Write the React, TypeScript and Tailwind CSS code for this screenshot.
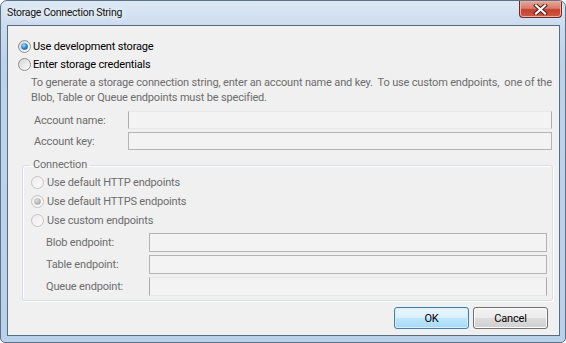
import { useId } from "react";

function Radio({ checked = false, disabled = false }: { checked?: boolean; disabled?: boolean }) {
  const id = useId().replace(/:/g, "");
  const ring = disabled ? "#c3c3c3" : "#8e8f8f";
  return (
    <svg width="13" height="13" viewBox="0 0 13 13" className="shrink-0">
      <defs>
        <linearGradient id={`f${id}`} x1="0" y1="0" x2="1" y2="1">
          <stop offset="0" stopColor={disabled ? "#ececec" : "#d2d2d2"} />
          <stop offset="1" stopColor={disabled ? "#fbfbfb" : "#ffffff"} />
        </linearGradient>
        <radialGradient id={`d${id}`} cx="0.4" cy="0.35" r="0.7">
          <stop offset="0" stopColor={disabled ? "#e4e4e4" : "#9fdcff"} />
          <stop offset="0.6" stopColor={disabled ? "#b8b8b8" : "#2b8ad1"} />
          <stop offset="1" stopColor={disabled ? "#a4a4a4" : "#12508a"} />
        </radialGradient>
      </defs>
      <circle cx="6.5" cy="6.5" r="6" fill={`url(#f${id})`} stroke={ring} strokeWidth="1" />
      {checked && <circle cx="6.5" cy="6.5" r="3.3" fill={`url(#d${id})`} />}
    </svg>
  );
}

function Field({ faint = false }: { faint?: boolean }) {
  return (
    <div
      className={
        faint
          ? "flex-1 h-full bg-[#f3f3f3] border border-[#ababab] border-t-[#e8e8e8] border-b-[#e8e8e8]"
          : "flex-1 h-full bg-[#f3f3f3] border border-[#b4b4b4]"
      }
    />
  );
}

function Button({ label, primary = false }: { label: string; primary?: boolean }) {
  return (
    <button
      className={
        primary
          ? "w-[75px] h-[22px] rounded-[3px] border border-[#3c7fb1] bg-[linear-gradient(#eaf6fd_0%,#d9f0fc_50%,#bee6fd_51%,#a7d9f5_100%)] shadow-[inset_0_0_0_1px_#d9f0fc] text-black"
          : "w-[75px] h-[22px] rounded-[3px] border border-[#707070] bg-[linear-gradient(#f2f2f2_0%,#ebebeb_50%,#dddddd_51%,#cfcfcf_100%)] shadow-[inset_0_0_0_1px_#fcfcfc] text-black"
      }
    >
      {label}
    </button>
  );
}

export default function App() {
  return (
    <div className="w-[566px] h-[343px] flex flex-col overflow-hidden rounded-t-[7px] rounded-b-[5px] border border-[#5e7185] bg-[linear-gradient(#dce8f5_0px,#cbdcef_24px,#bcd3ec_60px,#b9d1ea_100%)] font-['Roboto',sans-serif] text-[11px] leading-none tracking-[-0.17px]">
      <div className="h-[24px] flex items-start justify-between">
        <div className="pl-[6px] pt-[7px] text-[10.5px] tracking-[-0.28px] text-[#111] [text-shadow:0_0_6px_#fff,0_0_10px_#fff]">
          Storage Connection String
        </div>
        <div className="mr-[3px] w-[43px] h-[17px] rounded-b-[4px] border border-t-0 border-[#6e2a22] bg-[linear-gradient(#e8a597_0%,#d77c6c_45%,#c4412f_55%,#cf5a44_100%)] shadow-[inset_0_0_0_1px_#eab0a5] flex items-center justify-center">
          <svg width="15" height="11" viewBox="0 0 15 11">
            <path d="M3 1.5 L12 9.5 M12 1.5 L3 9.5" stroke="#4a1a14" strokeWidth="4" strokeLinecap="square" />
            <path d="M3 1.5 L12 9.5 M12 1.5 L3 9.5" stroke="#ffffff" strokeWidth="2.2" strokeLinecap="square" />
          </svg>
        </div>
      </div>

      <div className="flex-1 ml-[6px] mr-[5px] mb-[6px] border border-[#5a6c7e] bg-[#f0f0f0] flex flex-col text-black">
        <div className="pt-[11px] pl-[10px] flex flex-col">
          <div className="h-[18px] flex items-center gap-[2px]">
            <Radio checked />
            <span>Use development storage</span>
          </div>
          <div className="h-[18px] flex items-center gap-[2px]">
            <Radio />
            <span>Enter storage credentials</span>
          </div>
        </div>

        <div className="mt-[2px] pl-[23px] leading-[15px] tracking-[-0.17px] text-[#6d6d6d] whitespace-pre">
          {"To generate a storage connection string, enter an account name and key.  To use custom endpoints,  one of the"}
          <br />
          {"Blob, Table or Queue endpoints must be specified."}
        </div>

        <div className="mt-[6px] flex flex-col gap-[3px] pr-[7px]">
          <div className="h-[18px] flex items-center">
            <span className="w-[120px] pl-[26px] text-[#6d6d6d]">Account name:</span>
            <Field faint />
          </div>
          <div className="h-[18px] flex items-center">
            <span className="w-[120px] pl-[26px] text-[#6d6d6d]">Account key:</span>
            <Field />
          </div>
        </div>

        <fieldset className="mt-[7px] ml-[14px] mr-[6px] rounded-[3px] border border-[#d5dfe5] shadow-[inset_1px_1px_0_#fff,1px_1px_0_#fff] pb-[4px] pr-[5px] text-[#6d6d6d]">
          <legend className="ml-[7px] px-[3px] leading-[16px]">Connection</legend>
          <div className="pl-[8px] flex flex-col">
            <div className="h-[19px] flex items-center gap-[3px]">
              <Radio disabled />
              <span>Use default HTTP endpoints</span>
            </div>
            <div className="h-[19px] flex items-center gap-[3px]">
              <Radio disabled checked />
              <span>Use default HTTPS endpoints</span>
            </div>
            <div className="h-[19px] flex items-center gap-[3px]">
              <Radio disabled />
              <span>Use custom endpoints</span>
            </div>
          </div>
          <div className="mt-[3px] flex flex-col gap-[3px]">
            <div className="h-[19px] flex items-center">
              <span className="w-[126px] pl-[23px]">Blob endpoint:</span>
              <Field />
            </div>
            <div className="h-[19px] flex items-center">
              <span className="w-[126px] pl-[23px]">Table endpoint:</span>
              <Field />
            </div>
            <div className="h-[19px] flex items-center">
              <span className="w-[126px] pl-[23px]">Queue endpoint:</span>
              <Field faint />
            </div>
          </div>
        </fieldset>

        <div className="mt-[6px] mr-[11px] flex justify-end gap-[4px]">
          <Button label="OK" primary />
          <Button label="Cancel" />
        </div>
      </div>
    </div>
  );
}
